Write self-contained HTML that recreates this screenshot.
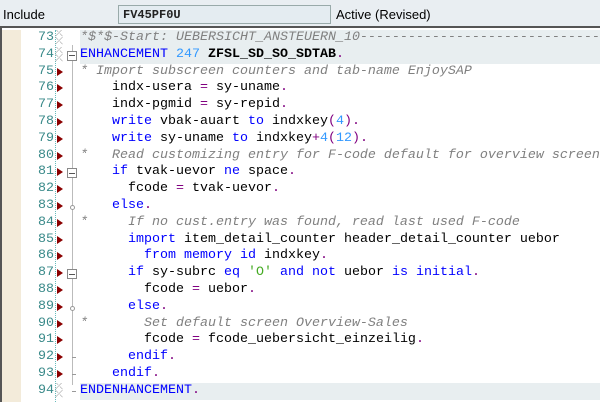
<!DOCTYPE html>
<html><head><style>
*{margin:0;padding:0;box-sizing:border-box}
body{width:600px;height:402px;overflow:hidden;background:#fff;font-family:"Liberation Sans",sans-serif;position:relative}
#top{position:absolute;left:0;top:0;width:600px;height:28px;background:#e9eef2;border-bottom:2px solid #555}
#top .l{position:absolute;left:3px;top:7px;font-size:13px;color:#000}
#top .box{position:absolute;left:118px;top:5px;width:213px;height:19px;border:1px solid #9aa;background:#e4ecf1;font-family:"Liberation Mono",monospace;font-weight:bold;font-size:12px;padding:2px 4px;color:#222}
#top .a{position:absolute;left:336px;top:7px;font-size:13px;color:#000}
#frame{position:absolute;left:0;top:28px;width:600px;height:374px;border-left:2px solid #555}
#beige{position:absolute;left:2px;top:30px;width:19px;height:372px;background:#f3ebda}
#dots{position:absolute;left:55px;top:30px;height:372px;border-left:1px dotted #6bb}
#fold{position:absolute;left:72px;top:45px;height:340px;border-left:1px solid #bbb}
.row{position:absolute;left:0;width:600px;height:16.8px;font-family:"Liberation Mono",monospace;font-size:13.33px;line-height:16.8px;white-space:pre;overflow:hidden}
.row.g .code{background:#e8eef0}
.num{position:absolute;left:22px;width:32px;text-align:right;color:#3a8a8a}
.mk{position:absolute;left:57px;top:4px;width:0;height:0;border-top:4.5px solid transparent;border-bottom:4.5px solid transparent;border-left:6px solid #8b0000}
.x{position:absolute;left:55px;top:0;font-size:10px;color:#999;line-height:8px;font-family:"DejaVu Sans",sans-serif}
.code{position:absolute;left:80px;width:520px;top:0;height:16.8px;color:#000;overflow:hidden}
.fb{position:absolute;left:67px;top:4px;width:10px;height:10px;border:1px solid #888;background:#fff}
.fb:after{content:"";position:absolute;left:1px;top:3.5px;width:6px;height:1px;background:#555}
.fo{position:absolute;left:70px;top:7px;width:5px;height:5px;border:1px solid #999;border-radius:50%;background:#fff}
.fe{position:absolute;left:72px;top:8px;width:4px;height:1px;background:#999}
.k{color:#0000ff}.c{color:#808080;font-style:italic}.o{color:#800080}.n{color:#3399ff}.s{color:#44aa22}.b{font-weight:bold}
</style></head><body>
<div id="top"><span class="l">Include</span><div class="box">FV45PF0U</div><span class="a">Active (Revised)</span></div>
<div id="frame"></div><div id="beige"></div><div id="dots"></div><div id="fold"></div>

<div class="row g" style="top:30px"><span class="num">73</span><span class="x">⤫<br>⤫</span><span class="code"><span class="c">*$*$-Start: UEBERSICHT_ANSTEUERN_10----------------------------------------</span></span></div>
<div class="row g" style="top:46.8px"><span class="num">74</span><span class="x">⤫<br>⤫</span><span class="fb"></span><span class="code"><span class="k">ENHANCEMENT</span> <span class="n">247</span> <span class="b">ZFSL_SD_SO_SDTAB</span><span class="o">.</span></span></div>
<div class="row" style="top:63.6px"><span class="num">75</span><span class="mk"></span><span class="code"><span class="c">* Import subscreen counters and tab-name EnjoySAP</span></span></div>
<div class="row" style="top:80.4px"><span class="num">76</span><span class="mk"></span><span class="code">    indx-usera <span class="o">=</span> sy-uname<span class="o">.</span></span></div>
<div class="row" style="top:97.2px"><span class="num">77</span><span class="mk"></span><span class="code">    indx-pgmid <span class="o">=</span> sy-repid<span class="o">.</span></span></div>
<div class="row" style="top:114px"><span class="num">78</span><span class="mk"></span><span class="code">    <span class="k">write</span> vbak-auart <span class="k">to</span> indxkey<span class="o">(</span><span class="n">4</span><span class="o">).</span></span></div>
<div class="row" style="top:130.8px"><span class="num">79</span><span class="mk"></span><span class="code">    <span class="k">write</span> sy-uname <span class="k">to</span> indxkey<span class="o">+</span><span class="n">4</span><span class="o">(</span><span class="n">12</span><span class="o">).</span></span></div>
<div class="row" style="top:147.6px"><span class="num">80</span><span class="mk"></span><span class="code"><span class="c">*   Read customizing entry for F-code default for overview screen</span></span></div>
<div class="row" style="top:164.4px"><span class="num">81</span><span class="mk"></span><span class="fb"></span><span class="code">    <span class="k">if</span> tvak-uevor <span class="k">ne</span> space<span class="o">.</span></span></div>
<div class="row" style="top:181.2px"><span class="num">82</span><span class="mk"></span><span class="code">      fcode <span class="o">=</span> tvak-uevor<span class="o">.</span></span></div>
<div class="row" style="top:198px"><span class="num">83</span><span class="mk"></span><span class="fo"></span><span class="code">    <span class="k">else</span><span class="o">.</span></span></div>
<div class="row" style="top:214.8px"><span class="num">84</span><span class="mk"></span><span class="code"><span class="c">*     If no cust.entry was found, read last used F-code</span></span></div>
<div class="row" style="top:231.6px"><span class="num">85</span><span class="mk"></span><span class="code">      <span class="k">import</span> item_detail_counter header_detail_counter uebor</span></div>
<div class="row" style="top:248.4px"><span class="num">86</span><span class="mk"></span><span class="code">        <span class="k">from memory id</span> indxkey<span class="o">.</span></span></div>
<div class="row" style="top:265.2px"><span class="num">87</span><span class="mk"></span><span class="fb"></span><span class="code">      <span class="k">if</span> sy-subrc <span class="k">eq</span> <span class="s">'O'</span> <span class="k">and not</span> uebor <span class="k">is initial</span><span class="o">.</span></span></div>
<div class="row" style="top:282px"><span class="num">88</span><span class="mk"></span><span class="code">        fcode <span class="o">=</span> uebor<span class="o">.</span></span></div>
<div class="row" style="top:298.8px"><span class="num">89</span><span class="mk"></span><span class="fo"></span><span class="code">      <span class="k">else</span><span class="o">.</span></span></div>
<div class="row" style="top:315.6px"><span class="num">90</span><span class="mk"></span><span class="code"><span class="c">*       Set default screen Overview-Sales</span></span></div>
<div class="row" style="top:332.4px"><span class="num">91</span><span class="mk"></span><span class="code">        fcode <span class="o">=</span> fcode_uebersicht_einzeilig<span class="o">.</span></span></div>
<div class="row" style="top:349.2px"><span class="num">92</span><span class="mk"></span><span class="fe"></span><span class="code">      <span class="k">endif</span><span class="o">.</span></span></div>
<div class="row" style="top:366px"><span class="num">93</span><span class="mk"></span><span class="fe"></span><span class="code">    <span class="k">endif</span><span class="o">.</span></span></div>
<div class="row g" style="top:382.8px"><span class="num">94</span><span class="x">⤫<br>⤫</span><span class="fe"></span><span class="code"><span class="k">ENDENHANCEMENT</span><span class="o">.</span></span></div>
</body></html>
